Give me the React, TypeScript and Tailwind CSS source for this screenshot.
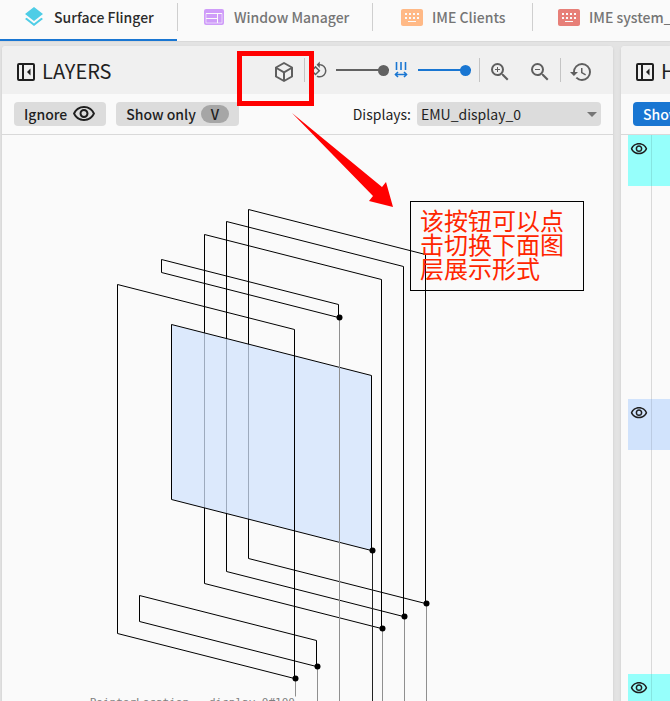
import type { ReactNode } from 'react'
import {
  MdLayers, MdKeyboardAlt, MdOutlineVisibility, MdRotate90DegreesCcw,
  MdZoomIn, MdZoomOut, MdHistory, MdArrowDropDown,
} from 'react-icons/md'

type Point = [number, number]

interface LayerRect {
  id: string
  corners: [Point, Point, Point, Point]
  labelY: number
  selected?: boolean
}

// corners: top left, top right, bottom right, bottom left
const layerRects: LayerRect[] = [
  { id: 'back', corners: [[248, 209], [425, 254], [425, 603], [248, 558]], labelY: 720 },
  { id: 'wallpaper', corners: [[226, 221], [403, 266], [403, 616], [226, 571]], labelY: 720 },
  { id: 'launcher', corners: [[204, 234], [381, 279], [381, 628], [204, 583]], labelY: 720 },
  { id: 'task', corners: [[171, 324], [371, 375], [371, 550], [171, 499]], labelY: 720, selected: true },
  { id: 'status-bar', corners: [[161, 259], [338, 304], [338, 317], [161, 272]], labelY: 720 },
  { id: 'nav-bar', corners: [[139, 595], [316, 640], [316, 666], [139, 621]], labelY: 720 },
  { id: 'pointer', corners: [[117, 284], [294, 329], [294, 678], [117, 633]], labelY: 696 },
]

const rows = [
  { id: 'a', className: 'mt-0 bg-[#96fffb]' },
  { id: 'b', className: 'mt-[213px] bg-[#d1e3fc]' },
  { id: 'c', className: 'mt-[224px] bg-[#96fffb]' },
]

function WebIcon() {
  return (
    <svg width="20" height="16" viewBox="0 0 20 16" fill="none">
      <rect width="20" height="16" rx="2" fill="#cf9cf9" />
      <path d="M2 4.5H18M2 9.5H13M13.5 5V14" stroke="#fafafa" strokeWidth="1" />
      <path d="M2 4.5V14H18V4.5" stroke="#fafafa" strokeWidth="1" opacity="0.6" />
    </svg>
  )
}

function PanelIcon() {
  return (
    <svg width="18" height="18" viewBox="0 0 18 18" fill="none" stroke="#1f1f1f" strokeWidth="2">
      <rect x="1" y="1" width="16" height="16" rx="1" />
      <path d="M6 1V17" />
      <path d="M13.5 5.5V12.5L10 9Z" fill="#1f1f1f" stroke="none" />
    </svg>
  )
}

function CubeIcon() {
  return (
    <svg width="24" height="24" viewBox="0 0 24 24" fill="none" stroke="#5f5f5f" strokeWidth="2" strokeLinejoin="round">
      <path d="M12 3L20 7.5V16.5L12 21L4 16.5V7.5Z" />
      <path d="M4.5 8L12 12.3L19.5 8M12 12.3V20.5" />
    </svg>
  )
}

function SpacingIcon() {
  return (
    <svg width="14" height="16" viewBox="0 0 14 16" fill="none" stroke="#1976d2" strokeWidth="1.6">
      <path d="M2.5 0V8M7 0V8M11.5 0V8M1.5 12.5H12.5" />
      <path d="M4 10L1.5 12.5L4 15M10 10L12.5 12.5L10 15" />
    </svg>
  )
}

function Tab({ icon, label, className }: { icon: ReactNode; label: string; className: string }) {
  return (
    <a href="#" className={`flex h-full shrink-0 items-center whitespace-nowrap ${className}`}>
      {icon}
      {label}
    </a>
  )
}

function TabDivider() {
  return <span className="mt-[3px] h-7 w-px shrink-0 self-start bg-[#cfcfcf]" />
}

function Slider({ label, className }: { label: string; className: string }) {
  return (
    <input
      type="range"
      aria-label={label}
      defaultValue={100}
      className={`h-3 w-[53px] shrink-0 appearance-none bg-linear-to-r bg-[length:100%_2px] bg-center bg-no-repeat [&::-webkit-slider-thumb]:size-[11px] [&::-webkit-slider-thumb]:appearance-none [&::-webkit-slider-thumb]:rounded-full ${className}`}
    />
  )
}

function LayersCanvas() {
  return (
    <svg width="611" height="566" viewBox="2 135 611 566" className="block shrink-0">
      <g transform="translate(0.5 0.5)">
        {layerRects.map(({ id, corners, labelY, selected }) => {
          const [x, y] = corners[2]
          return (
            <g key={id}>
              <path d={`M${x + 1} ${y}V${labelY}`} stroke={selected ? '#222' : '#8f8f8f'} />
              <polygon
                points={corners.map((c) => c.join(',')).join(' ')}
                fill={selected ? '#d1e3fc' : 'none'}
                fillOpacity="0.75"
                stroke="#000"
              />
              <circle cx={x + 1} cy={y} r="3" />
            </g>
          )
        })}
      </g>
      <text x="295" y="706" textAnchor="end" className="fill-[#808080] font-['DejaVu_Sans_Mono',monospace] text-[11px]">
        PointerLocation - display 0#100
      </text>
    </svg>
  )
}

function LayersPanel() {
  return (
    <section className="flex min-w-0 flex-1 flex-col overflow-hidden rounded-t bg-[#fafafa] shadow">
      <header className="flex h-12 shrink-0 items-center bg-[#f0f0f0] pt-1 pr-5 pl-[15px]">
        <PanelIcon />
        <h2 className="ml-[7px] flex-1 pb-[2px] text-xl">LAYERS</h2>
        <button type="button" aria-label="Toggle 3D view"><CubeIcon /></button>
        <div className="flex items-center pb-1">
          <span className="ml-2 h-6 w-px bg-[#c4c4c4]" />
          <MdRotate90DegreesCcw className="ml-[5px] size-[18px] text-[#5f5f5f]" />
          <Slider label="Rotation" className="ml-2 from-[#616161] to-[#616161] [&::-webkit-slider-thumb]:bg-[#616161]" />
          <span className="mx-[5px]"><SpacingIcon /></span>
          <Slider label="Spacing" className="ml-[5px] from-[#1976d2] to-[#1976d2] [&::-webkit-slider-thumb]:bg-[#1976d2]" />
          <span className="ml-2 h-6 w-px bg-[#c4c4c4]" />
        </div>
        <button type="button" aria-label="Zoom in" className="ml-2"><MdZoomIn className="size-6 text-[#5f5f5f]" /></button>
        <button type="button" aria-label="Zoom out" className="ml-4"><MdZoomOut className="size-6 text-[#5f5f5f]" /></button>
        <span className="mb-1 ml-2 h-6 w-px bg-[#c4c4c4]" />
        <button type="button" aria-label="Reset" className="ml-2"><MdHistory className="size-6 text-[#5f5f5f]" /></button>
      </header>
      <div className="flex h-[41px] shrink-0 items-center gap-[10px] border-b border-[#d9d9d9] px-3">
        <button type="button" className="flex h-6 items-center gap-[5px] rounded bg-[#dcdcdc] px-[10px] font-medium">
          Ignore <MdOutlineVisibility className="size-6" />
        </button>
        <button type="button" className="flex h-6 items-center gap-[5px] rounded bg-[#dcdcdc] px-[10px] font-medium">
          Show only <span className="h-[18px] w-7 rounded-full bg-[#a6a6a6] leading-[18px]">V</span>
        </button>
        <label htmlFor="display" className="ml-auto">Displays:</label>
        <div className="relative -ml-1 h-6 w-[184px]">
          <select id="display" className="h-6 w-full appearance-none rounded bg-[#dcdcdc] pl-1">
            <option>EMU_display_0</option>
          </select>
          <MdArrowDropDown className="pointer-events-none absolute top-0 right-[-3px] size-6 text-[#757575]" />
        </div>
      </div>
      <div className="min-h-0 flex-1 overflow-hidden">
        <LayersCanvas />
      </div>
    </section>
  )
}

function HierarchyPanel() {
  return (
    <section className="flex w-[49px] shrink-0 flex-col overflow-hidden rounded-tl bg-[#fafafa] shadow">
      <header className="flex h-12 shrink-0 items-center bg-[#f0f0f0] pt-1 pl-[15px]">
        <span className="shrink-0"><PanelIcon /></span>
        <h2 className="ml-[7px] pb-[2px] text-xl">HIERARCHY</h2>
      </header>
      <div className="flex h-[41px] shrink-0 items-center border-b border-[#d9d9d9] pl-3">
        <button type="button" className="h-6 shrink-0 rounded bg-[#1976d2] px-[10px] font-medium whitespace-nowrap text-white">
          Show diff
        </button>
      </div>
      <div className="min-h-0 flex-1 overflow-hidden pl-[7px]">
        {/* indent guide runs behind the rows */}
        <div className="h-full bg-linear-to-r from-[#d9d9d9] to-[#d9d9d9] bg-[length:1px_100%] bg-[position:23px_0] bg-no-repeat">
          {rows.map((row) => (
            <div key={row.id} className={`flex h-[51px] ${row.className}`}>
              <span className="h-full w-6 border-r border-black/10 pt-[5px] pl-[2px]">
                <MdOutlineVisibility className="size-[18px]" />
              </span>
            </div>
          ))}
        </div>
      </div>
    </section>
  )
}

export default function App() {
  return (
    <div className="relative flex h-screen flex-col overflow-hidden bg-[#e3e3e3] font-['Noto_Sans_CJK_SC',sans-serif] text-sm text-[#1f1f1f]">
      <nav className="flex h-[42px] shrink-0 items-center overflow-hidden border-b border-[#d9d9d9] bg-[#fafafa] font-medium text-[#757575]">
        <Tab
          className="w-[177px] gap-2 border-b-2 border-[#1976d2] pb-[6px] pl-[22px] text-[#2b2b2b]"
          icon={<MdLayers className="size-6 text-[#4ecde6]" />}
          label="Surface Flinger"
        />
        <TabDivider />
        <Tab className="w-[194px] gap-[10px] pb-2 pl-[26px]" icon={<WebIcon />} label="Window Manager" />
        <TabDivider />
        <Tab className="w-[159px] gap-2 pb-2 pl-[27px]" icon={<MdKeyboardAlt className="size-6 text-[#ffb986]" />} label="IME Clients" />
        <TabDivider />
        <Tab className="gap-2 pb-2 pl-6" icon={<MdKeyboardAlt className="size-6 text-[#e77f78]" />} label="IME system_server" />
      </nav>
      <main className="flex min-h-0 flex-1 gap-2 pt-1 pl-[2px]">
        <LayersPanel />
        <HierarchyPanel />
      </main>

      {/* annotations */}
      <div className="pointer-events-none absolute top-[51px] left-[237px] h-[55px] w-[77px] border-[5px] border-[#ff0000]" />
      <svg className="pointer-events-none absolute top-[112px] left-[291px]" width="104" height="96" viewBox="291 112 104 96">
        <path d="M292 113L382 187L386 182L393 207L369 201L373 196Z" fill="#ff0000" />
      </svg>
      <p className="absolute top-[201px] left-[410px] h-[90px] w-[174px] border border-black px-[9px] pt-[6px] text-2xl leading-6 text-[#ff2600]">
        该按钮可以点击切换下面图层展示形式
      </p>
    </div>
  )
}
